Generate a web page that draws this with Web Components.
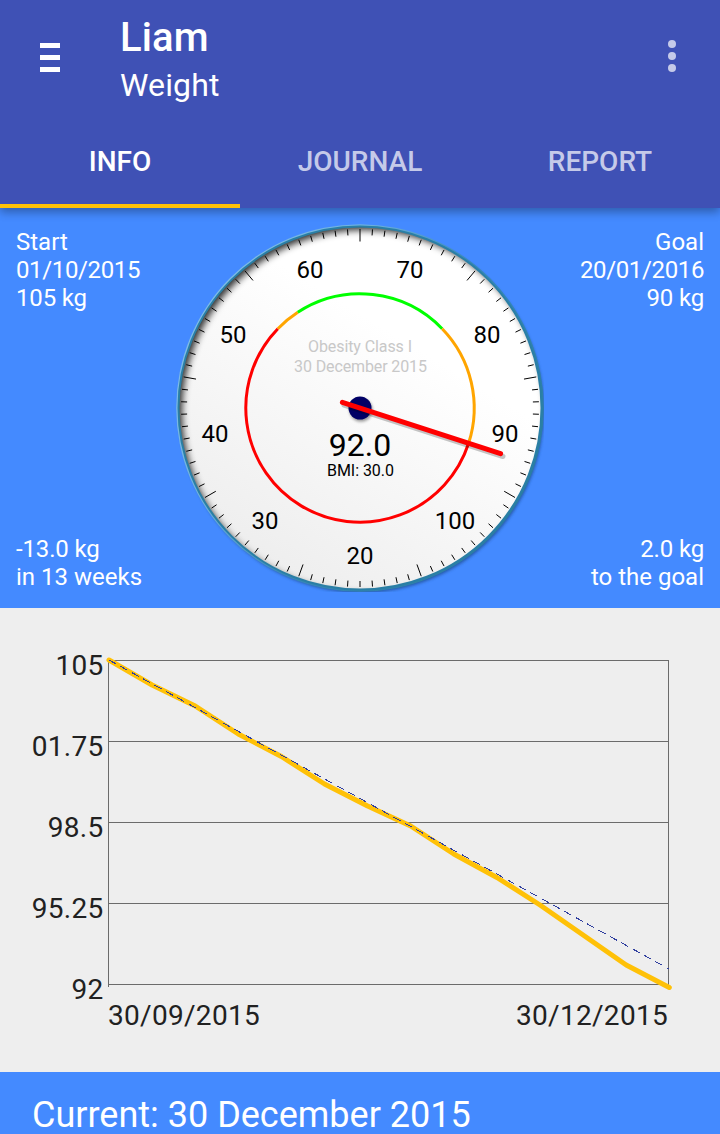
<!DOCTYPE html>
<html lang="en">
<head>
<meta charset="utf-8">
<title>Weight</title>
<style>
    body {
        margin: 0;
        width: 720px;
        height: 1134px;
        overflow: hidden;
        background: #448aff;
        color: #fff;
        font-family: Roboto, sans-serif;
    }
</style>
</head>
<body>
<weight-app></weight-app>

<script>
class AppHeader extends HTMLElement {

    constructor() {
        super();
        this.attachShadow({ mode: "open" });
    }

    connectedCallback() {
        this.shadowRoot.innerHTML = /* html */ `
            <style>
                :host {
                    display: flex;
                    align-items: flex-start;
                    height: 112px;
                    box-sizing: border-box;
                    padding: 13px 40px 0;
                }

                svg {
                    display: block;
                    flex: none;
                }

                .menu {
                    margin-top: 30px;
                }

                .more {
                    margin: 27px 4px 0 0;
                }

                .titles {
                    flex: 1;
                    padding-left: 60px;
                }

                .title {
                    font-size: 40px;
                    font-weight: 500;
                    line-height: 48px;
                    margin-top: 1px;
                    letter-spacing: 0.1px;
                }

                .subtitle {
                    font-size: 32px;
                    line-height: 38px;
                    margin-top: 4px;
                    letter-spacing: 0.15px;
                }
            </style>

            <svg class="menu" width="20" height="29" fill="#fff">
                <rect width="20" height="5"/>
                <rect y="12" width="20" height="5"/>
                <rect y="24" width="20" height="5"/>
            </svg>
            <div class="titles">
                <div class="title"><slot name="title"></slot></div>
                <div class="subtitle"><slot name="subtitle"></slot></div>
            </div>
            <svg class="more" width="8" height="32" fill="#c5cae9">
                <circle cx="4" cy="4" r="4"/>
                <circle cx="4" cy="16" r="4"/>
                <circle cx="4" cy="28" r="4"/>
            </svg>
        `;
    }
}

customElements.define('app-header', AppHeader);


class AppTab extends HTMLElement {

    constructor() {
        super();
        this.attachShadow({ mode: "open" });
    }

    connectedCallback() {
        this.shadowRoot.innerHTML = /* html */ `
            <style>
                :host {
                    display: flex;
                    flex: 1;
                    justify-content: center;
                    box-sizing: border-box;
                    height: 96px;
                    padding-top: 33px;
                    border-bottom: 4px solid transparent;
                    color: #c5cae9;
                    font-size: 28px;
                    font-weight: 500;
                    line-height: 33px;
                }

                :host([selected]) {
                    color: #fff;
                    border-bottom-color: #ffc107;
                }
            </style>

            <slot></slot>
        `;
    }
}

customElements.define('app-tab', AppTab);


class WeightGauge extends HTMLElement {

    constructor() {
        super();
        this.attachShadow({ mode: "open" });
    }

    // Angle 0 is at the top, clockwise
    point(angle, radius) {
        const rad = angle * Math.PI / 180;
        return [(184 + radius * Math.sin(rad)).toFixed(2), (184 - radius * Math.cos(rad)).toFixed(2)];
    }

    ticks() {
        let d = '';
        for (let angle = 0; angle < 360; angle += 4) {
            const inner = angle % 40 === 0 ? 166.5 : 173;
            d += `M${this.point(angle, inner)}L${this.point(angle, 179)}`;
        }
        return d;
    }

    arc(from, to, color) {
        const large = to - from > 180 ? 1 : 0;
        return `<path d="M${this.point(from, 114.2)}A114.2 114.2 0 ${large} 1 ${this.point(to, 114.2)}" stroke="${color}"/>`;
    }

    connectedCallback() {
        const labels = [
            [20, 184, 340], [30, 89, 305], [40, 39, 218], [50, 57, 119], [60, 134, 54],
            [70, 234, 54], [80, 311, 119], [90, 329, 218], [100, 279, 305]
        ];

        this.shadowRoot.innerHTML = /* html */ `
            <style>
                :host {
                    display: block;
                    width: 368px;
                    height: 368px;
                }

                svg {
                    display: block;
                }

                text {
                    text-anchor: middle;
                    fill: #000;
                }
            </style>

            <svg width="368" height="368" viewBox="0 0 368 368">
                <defs>
                    <linearGradient id="face" x1="0.2" y1="0.95" x2="0.6" y2="0.3">
                        <stop offset="0" stop-color="#ededed"/>
                        <stop offset="1" stop-color="#fff"/>
                    </linearGradient>
                    <linearGradient id="rim" x1="0" y1="0.2" x2="1" y2="0.8">
                        <stop offset="0" stop-color="#84c0e8"/>
                        <stop offset="0.3" stop-color="#6cb0dc"/>
                        <stop offset="0.55" stop-color="#3988ba"/>
                        <stop offset="1" stop-color="#287c9e"/>
                    </linearGradient>
                    <clipPath id="inside"><circle cx="184" cy="184" r="181.5"/></clipPath>
                    <filter id="soft" x="-10%" y="-10%" width="120%" height="120%">
                        <feGaussianBlur stdDeviation="3.5"/>
                    </filter>
                    <filter id="small" x="-20%" y="-20%" width="140%" height="140%">
                        <feGaussianBlur stdDeviation="1.4"/>
                    </filter>
                </defs>

                <circle cx="185.5" cy="186.5" r="182.5" fill="#1f4c91" opacity="0.75" filter="url(#small)"/>
                <circle cx="184" cy="184" r="183.8" fill="url(#rim)"/>
                <circle cx="184" cy="184" r="181.5" fill="url(#face)"/>
                <g clip-path="url(#inside)">
                    <circle cx="188" cy="188" r="189" fill="none" stroke="#000" stroke-opacity="0.8" stroke-width="14" filter="url(#soft)"/>
                </g>
                <circle cx="184" cy="184" r="181.5" fill="none" stroke="#2a7fa5" stroke-width="2"/>

                <path d="${this.ticks()}" stroke="#000" stroke-width="1" fill="none"/>

                <g fill="none" stroke-width="3">
                    ${this.arc(108, 314, '#f00')}
                    ${this.arc(314, 327, '#ffa500')}
                    ${this.arc(327, 406, '#0f0')}
                    ${this.arc(46, 108, '#ffa500')}
                </g>

                <g font-size="24">
                    ${labels.map(([value, x, y]) => `<text x="${x}" y="${y}">${value}</text>`).join('')}
                </g>
                <g font-size="16">
                    <text x="184" y="128" style="fill: #c8c8c8" textLength="104">Obesity Class I</text>
                    <text x="184.5" y="148" style="fill: #c8c8c8" textLength="133">30 December 2015</text>
                    <text x="184.5" y="252" textLength="67">BMI: 30.0</text>
                </g>
                <text x="184" y="232" font-size="32">92.0</text>

                <circle cx="185" cy="186" r="11.5" fill="#000" opacity="0.4" filter="url(#small)"/>
                <circle cx="184" cy="184" r="11.5" fill="#000066"/>
                <g stroke-width="5" stroke-linecap="round">
                    <path d="M168 181L327 232.5" stroke="#000" stroke-opacity="0.22"/>
                    <path d="M166.4 178.3L324.6 229.7" stroke="#f00"/>
                </g>
            </svg>
        `;
    }
}

customElements.define('weight-gauge', WeightGauge);


class WeightSummary extends HTMLElement {

    constructor() {
        super();
        this.attachShadow({ mode: "open" });
    }

    connectedCallback() {
        this.shadowRoot.innerHTML = /* html */ `
            <style>
                :host {
                    display: grid;
                    grid-template-columns: 1fr 368px 1fr;
                    box-sizing: border-box;
                    height: 400px;
                    padding: 16px;
                    background: #448aff;
                    font-size: 24px;
                    line-height: 28px;
                    white-space: nowrap;
                }

                .side {
                    display: flex;
                    flex-direction: column;
                    justify-content: space-between;
                    padding: 4px 0 1px;
                }

                .right {
                    text-align: right;
                }

                .date {
                    letter-spacing: -0.37px;
                }

                .tight {
                    letter-spacing: -0.15px;
                }
            </style>

            <div class="side">
                <div>Start<br><span class="date">01/10/2015</span><br><span class="tight">105 kg</span></div>
                <div><span class="tight">-13.0 kg</span><br>in 13 weeks</div>
            </div>
            <weight-gauge></weight-gauge>
            <div class="side right">
                <div>Goal<br><span class="date">20/01/2016</span><br><span class="tight">90 kg</span></div>
                <div><span class="tight">2.0 kg</span><br>to the goal</div>
            </div>
        `;
    }
}

customElements.define('weight-summary', WeightSummary);


class WeightChart extends HTMLElement {

    constructor() {
        super();
        this.attachShadow({ mode: "open" });
    }

    connectedCallback() {
        const rows = ['105', '01.75', '98.5', '95.25', '92'];
        const values = [52, 77, 98, 126, 148.5, 176, 198, 218, 246, 269.5, 297, 327, 357, 379.5];
        const points = values.map((y, i) => `${(109 + i * 43.1).toFixed(1)},${y}`).join(' ');

        this.shadowRoot.innerHTML = /* html */ `
            <style>
                :host {
                    display: block;
                    height: 464px;
                    background: #eee;
                }

                svg {
                    display: block;
                }

                text {
                    fill: #212121;
                    font-size: 28px;
                    letter-spacing: 0.3px;
                }

                .end {
                    text-anchor: end;
                }
            </style>

            <svg width="720" height="464" viewBox="0 0 720 464">
                <g fill="#6b6b6b">
                    ${rows.map((row, i) => `<rect x="108" y="${52 + i * 81}" width="561" height="1"/>`).join('')}
                    <rect x="108" y="52" width="1" height="327"/>
                    <rect x="668" y="52" width="1" height="325"/>
                </g>
                ${rows.map((row, i) => `<text class="end" x="103.5" y="${67 + i * 81}">${row}</text>`).join('')}
                <text x="108" y="417">30/09/2015</text>
                <text class="end" x="668" y="417">30/12/2015</text>
                <polyline points="${points}" fill="none" stroke="#ffc107" stroke-width="5" stroke-linecap="round" stroke-linejoin="round"/>
                <path d="M109 52L669 361" stroke="#303f9f" stroke-width="1" stroke-dasharray="8 5" shape-rendering="crispEdges"/>
            </svg>
        `;
    }
}

customElements.define('weight-chart', WeightChart);


class WeightApp extends HTMLElement {

    constructor() {
        super();
        this.attachShadow({ mode: "open" });
    }

    connectedCallback() {
        this.shadowRoot.innerHTML = /* html */ `
            <style>
                :host {
                    display: flex;
                    flex-direction: column;
                }

                header {
                    position: relative;
                    z-index: 1;
                    background: #3f51b5;
                    box-shadow: 0 4px 9px rgba(0, 0, 0, 0.33);
                }

                nav {
                    display: flex;
                }

                .current {
                    padding: 24px 32px 0;
                    font-size: 36px;
                    line-height: 38px;
                    white-space: nowrap;
                }
            </style>

            <header>
                <app-header>
                    <span slot="title">Liam</span>
                    <span slot="subtitle">Weight</span>
                </app-header>
                <nav>
                    <app-tab selected>INFO</app-tab>
                    <app-tab>JOURNAL</app-tab>
                    <app-tab>REPORT</app-tab>
                </nav>
            </header>
            <weight-summary></weight-summary>
            <weight-chart></weight-chart>
            <div class="current">Current: 30 December 2015</div>
        `;
    }
}

customElements.define('weight-app', WeightApp);
</script>
</body>
</html>
